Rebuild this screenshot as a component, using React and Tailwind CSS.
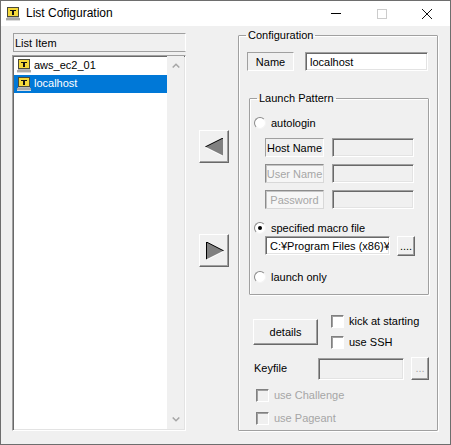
const FONT = "font-['Liberation_Sans',Arial,sans-serif]";

function TermIcon({ className }) {
  return (
    <svg viewBox="0 0 14 14" className={className} shapeRendering="crispEdges">
      <rect x="1.5" y="0.5" width="11" height="9" fill="#f5d93a" stroke="#4a4a3a" />
      <path d="M4 2.5h6v1.2H7.6V8H6.4V3.7H4z" fill="#111" />
      <rect x="1" y="10" width="12" height="1" fill="#b8b8b8" />
      <rect x="0" y="11" width="14" height="2" fill="#a9a9a9" />
      <rect x="0" y="13" width="14" height="1" fill="#dcdcdc" />
    </svg>
  );
}

function Edit({ className = '', disabled, children }) {
  return (
    <div
      className={`flex items-center overflow-hidden whitespace-nowrap border border-t-[#a0a0a0] border-l-[#a0a0a0] border-r-white border-b-white pl-[4px] pt-px shadow-[inset_1px_1px_0_#696969,inset_-1px_-1px_0_#e3e3e3] ${
        disabled ? 'bg-[#f0f0f0]' : 'bg-white'
      } ${className}`}
    >
      {children}
    </div>
  );
}

function Label3D({ className = '', children }) {
  return (
    <div className={`flex items-center justify-center whitespace-nowrap border border-t-[#a0a0a0] border-l-[#a0a0a0] border-r-white border-b-white pt-px ${className}`}>
      {children}
    </div>
  );
}

function DisabledLabel({ children }) {
  return (
    <div className="flex h-[19px] w-[59px] items-center justify-center whitespace-nowrap border border-t-[#8c8c8c] border-l-[#8c8c8c] border-r-[#d8d8d8] border-b-[#d8d8d8] bg-[#f6f6f6] pt-px text-[#a6a6a6] shadow-[inset_1px_1px_0_#c4c4c4]">
      {children}
    </div>
  );
}

function Btn({ className = '', children }) {
  return (
    <div className={`flex shrink-0 items-center justify-center border border-t-white border-l-white border-r-[#696969] border-b-[#696969] bg-[#f0f0f0] shadow-[inset_-1px_-1px_0_#a0a0a0] ${className}`}>
      {children}
    </div>
  );
}

function Radio({ on, children, className = '' }) {
  return (
    <div className={`flex h-[16px] items-center ${className}`}>
      <div className="flex h-[12px] w-[12px] items-center justify-center rounded-full border border-t-[#8a8a8a] border-l-[#8a8a8a] border-r-[#f4f4f4] border-b-[#f4f4f4] bg-white">
        {on && <div className="h-[4px] w-[4px] rounded-full bg-black" />}
      </div>
      <span className="ml-[5px]">{children}</span>
    </div>
  );
}

function Check({ disabled, children, className = '' }) {
  return (
    <div className={`flex h-[13px] items-center ${disabled ? 'text-[#a6a6a6]' : ''} ${className}`}>
      <div
        className={`h-[13px] w-[13px] shrink-0 border border-t-[#808080] border-l-[#808080] border-r-white border-b-white shadow-[inset_1px_1px_0_#a0a0a0] ${
          disabled ? 'bg-[#f0f0f0]' : 'bg-white'
        }`}
      />
      <span className="ml-[5px]">{children}</span>
    </div>
  );
}

function Group({ title, className = '', children }) {
  return (
    <fieldset className={`rounded-[1px] border border-[#a0a0a0] shadow-[1px_1px_0_white,inset_1px_1px_0_white] ${className}`}>
      <legend className="ml-[7px] px-[2px] leading-[16px]">{title}</legend>
      {children}
    </fieldset>
  );
}

export default function App() {
  return (
    <div className={`flex h-[445px] w-[451px] flex-col overflow-hidden border border-[#6e6e6e] bg-[#f0f0f0] text-[11px] leading-none text-black ${FONT}`}>
      {/* Title bar */}
      <div className="flex h-[25px] shrink-0 items-center bg-white">
        <TermIcon className="ml-[5px] h-[14px] w-[14px]" />
        <span className="mb-[2px] ml-[6px] text-[12px]">List Cofiguration</span>
        <div className="ml-auto flex items-center">
          <div className="h-px w-[10px] bg-black" />
          <div className="ml-[36px] h-[10px] w-[10px] border border-[#cccccc]" />
          <svg viewBox="0 0 10 10" className="ml-[35px] mr-[18px] h-[10px] w-[10px]">
            <path d="M0 0L10 10M10 0L0 10" stroke="#111" strokeWidth="1" fill="none" />
          </svg>
        </div>
      </div>

      <div className="flex flex-1 items-start pl-[11px]">
        {/* Item list */}
        <div className="mt-[7px] flex w-[174px] shrink-0 flex-col">
          <div className="ml-px flex h-[19px] items-center border border-t-[#a0a0a0] border-l-[#a0a0a0] border-b-[#a0a0a0] border-r-white pl-px pt-[2px]">
            List Item
          </div>
          <div className="mt-[3px] flex h-[376px] border border-t-[#a0a0a0] border-l-[#a0a0a0] border-r-white border-b-white bg-white shadow-[inset_1px_1px_0_#696969,inset_-1px_-1px_0_#e3e3e3]">
            <div className="flex flex-1 flex-col pl-px pt-[1px]">
              <div className="flex h-[18px] items-center pl-[3px]">
                <TermIcon className="h-[14px] w-[14px]" />
                <span className="mb-[2px] ml-[3px]">aws_ec2_01</span>
              </div>
              <div className="flex h-[18px] items-center bg-[#0078d7] pl-[3px] text-white">
                <TermIcon className="h-[14px] w-[14px]" />
                <span className="mb-[2px] ml-[3px]">localhost</span>
              </div>
            </div>
            <div className="mb-px mr-px flex w-[17px] flex-col items-center justify-between bg-[#f0f0f0] py-[7px]">
              <svg viewBox="0 0 8 5" className="h-[5px] w-[8px]">
                <path d="M.7 4.5L4 1.2 7.3 4.5" stroke="#a6a6a6" strokeWidth="1.5" fill="none" />
              </svg>
              <svg viewBox="0 0 8 5" className="h-[5px] w-[8px]">
                <path d="M.7.5L4 3.8 7.3.5" stroke="#a6a6a6" strokeWidth="1.5" fill="none" />
              </svg>
            </div>
          </div>
        </div>

        {/* Move buttons */}
        <div className="ml-[13px] mt-[104px] flex w-[30px] shrink-0 flex-col gap-[71px]">
          <Btn className="h-[33px] w-[30px]">
            <svg viewBox="0 0 18 18" className="h-[18px] w-[18px]" shapeRendering="crispEdges">
              <path d="M0 9L18 0V18z" fill="#808080" />
              <path d="M0 9L18 0" stroke="#000" strokeWidth="1" fill="none" shapeRendering="auto" />
              <path d="M0 9L18 18" stroke="#fff" strokeWidth="1" fill="none" shapeRendering="auto" />
            </svg>
          </Btn>
          <Btn className="h-[33px] w-[30px]">
            <svg viewBox="0 0 18 18" className="ml-px h-[18px] w-[18px]" shapeRendering="crispEdges">
              <path d="M0 0L18 9L0 18z" fill="#808080" />
              <path d="M.5 18V0L18 9" stroke="#000" strokeWidth="1" fill="none" shapeRendering="auto" />
              <path d="M18 9L0 18" stroke="#fff" strokeWidth="1" fill="none" shapeRendering="auto" />
            </svg>
          </Btn>
        </div>

        {/* Configuration */}
        <Group title="Configuration" className="ml-[9px] mt-[1px] h-[404px] w-[200px] shrink-0">
          <div className="ml-[8px] mt-[9px] flex gap-[11px]">
            <Label3D className="h-[19px] w-[47px]">Name</Label3D>
            <Edit className="h-[19px] w-[123px]">localhost</Edit>
          </div>

          <Group title="Launch Pattern" className="ml-[10px] mt-[19px] h-[205px] w-[180px]">
            <Radio className="ml-[4px] mt-[9px]">autologin</Radio>
            <div className="ml-[15px] mt-[7px] flex flex-col gap-[7px]">
              <div className="flex gap-[8px]">
                <Label3D className="h-[19px] w-[59px]">Host Name</Label3D>
                <Edit disabled className="h-[19px] w-[82px]" />
              </div>
              <div className="flex gap-[8px]">
                <DisabledLabel>User Name</DisabledLabel>
                <Edit disabled className="h-[19px] w-[82px]" />
              </div>
              <div className="flex gap-[8px]">
                <DisabledLabel>Password</DisabledLabel>
                <Edit disabled className="h-[19px] w-[82px]" />
              </div>
            </div>
            <Radio on className="ml-[4px] mt-[11px]">specified macro file</Radio>
            <div className="ml-[15px] flex gap-[7px]">
              <Edit className="h-[19px] w-[125px]">C:¥Program Files (x86)¥</Edit>
              <Btn className="h-[20px] w-[18px]">....</Btn>
            </div>
            <Radio className="ml-[4px] mt-[13px]">launch only</Radio>
          </Group>

          <div className="ml-[14px] mt-[20px] flex">
            <Btn className="mt-[4px] h-[26px] w-[65px]">details</Btn>
            <div className="ml-[13px] flex flex-col gap-[8px]">
              <Check>kick at starting</Check>
              <Check>use SSH</Check>
            </div>
          </div>

          <div className="ml-[15px] mt-[8px] flex items-center">
            <span className="w-[64px]">Keyfile</span>
            <Edit disabled className="h-[22px] w-[86px]" />
            <Btn className="ml-[7px] h-[23px] w-[18px] text-[#a6a6a6]">...</Btn>
          </div>

          <div className="ml-[17px] mt-[9px] flex flex-col gap-[10px]">
            <Check disabled>use Challenge</Check>
            <Check disabled>use Pageant</Check>
          </div>
        </Group>
      </div>
    </div>
  );
}
